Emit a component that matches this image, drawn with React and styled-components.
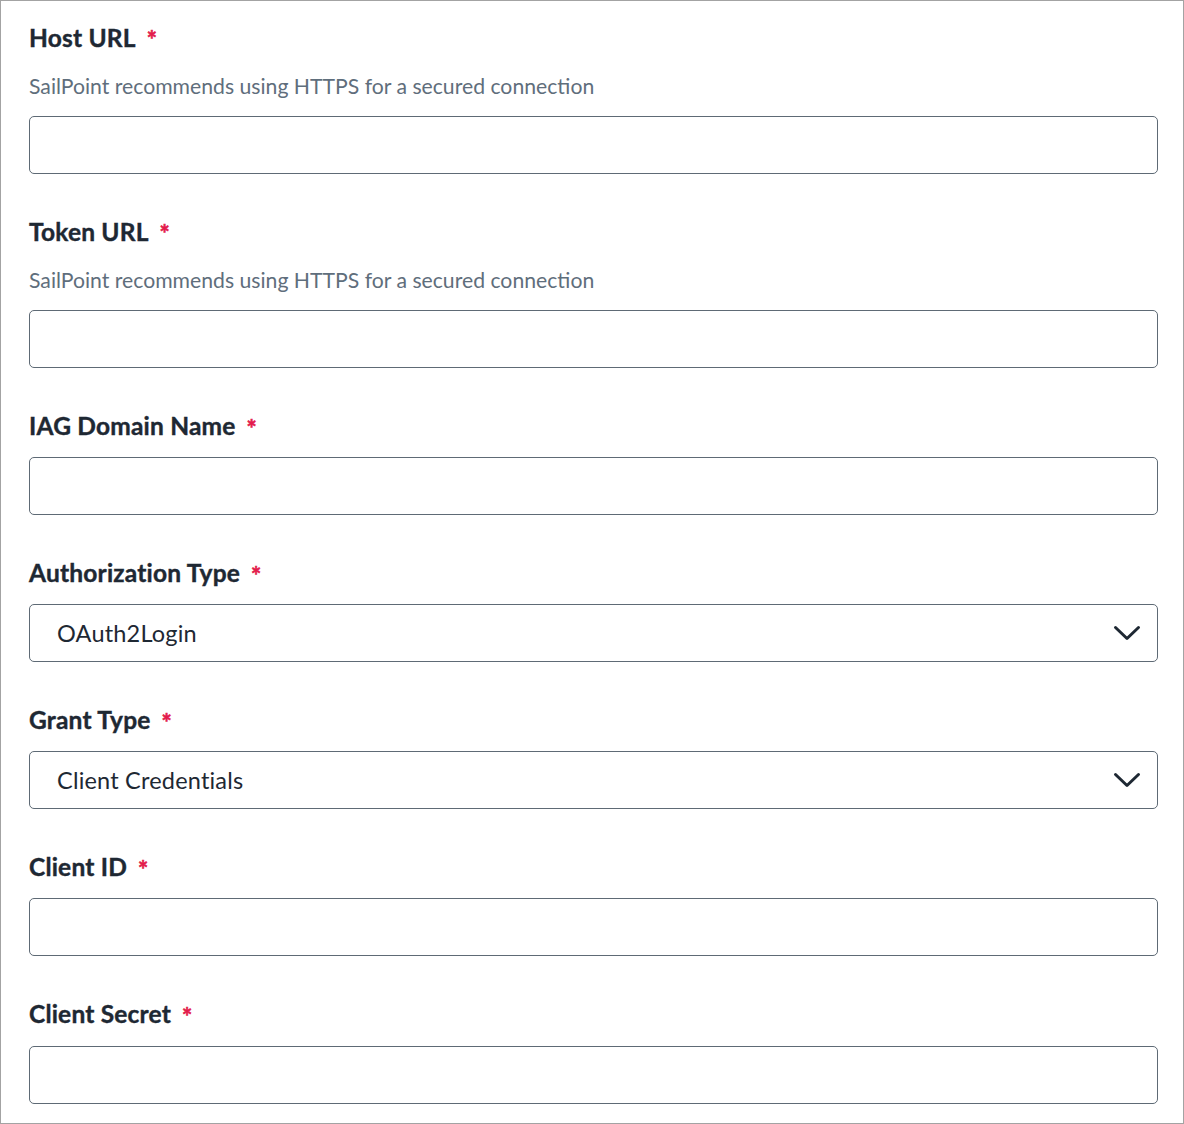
import styled, { createGlobalStyle } from 'styled-components';

const GlobalStyle = createGlobalStyle`
    html, body {
        margin: 0;
        padding: 0;
        background: #ffffff;
    }
    * {
        box-sizing: border-box;
    }
`;

const Panel = styled.form`
    width: 1184px;
    height: 1124px;
    border: 1px solid #a3a3a3;
    padding: 21.2px 25px 0 28px;
    display: flex;
    flex-direction: column;
    gap: 42.5px;
    font-family: Lato, "Liberation Sans", sans-serif;
    overflow: hidden;
`;

const Field = styled.div`
    display: flex;
    flex-direction: column;
`;

const Label = styled.label`
    display: flex;
    align-items: center;
    gap: 11px;
    height: 30px;
    margin-bottom: 16.6px;
    font-size: 24.5px;
    font-weight: 700;
    letter-spacing: 0.2px;
    color: #1e2833;
    -webkit-text-stroke: 0.4px #1e2833;
`;

const Required = styled.span`
    color: #e31b4c;
    -webkit-text-stroke: 0.6px #e31b4c;
    font-size: 24px;
    font-weight: 700;
    line-height: 1;
    margin-top: 6px;
`;

const Helper = styled.p`
    margin: 5.5px 0 17.6px;
    font-size: 21.2px;
    line-height: 24px;
    color: #5f6e7c;
`;

const TextInput = styled.input`
    width: 100%;
    height: 58px;
    border: 1px solid #5e6a75;
    border-radius: 5px;
    padding: 0 26px;
    font-family: inherit;
    font-size: 23px;
    color: #1e2833;
    background: #ffffff;
    outline: none;
`;

const SelectBox = styled.div`
    width: 100%;
    height: 58px;
    border: 1px solid #5e6a75;
    border-radius: 5px;
    padding: 0 16px 0 27px;
    display: flex;
    align-items: center;
    justify-content: space-between;
    font-size: 23.5px;
    letter-spacing: 0.2px;
    color: #1e2833;
    background: #ffffff;
`;

const Chevron = () => (
    <svg width="28" height="16" viewBox="0 0 28 16" fill="none">
        <path d="M2.5 2.5 L14 13.5 L25.5 2.5" stroke="#1e2833" strokeWidth="3" strokeLinecap="round" strokeLinejoin="round" />
    </svg>
);

const fields = [
    { label: 'Host URL', helper: 'SailPoint recommends using HTTPS for a secured connection' },
    { label: 'Token URL', helper: 'SailPoint recommends using HTTPS for a secured connection' },
    { label: 'IAG Domain Name' },
    { label: 'Authorization Type', select: 'OAuth2Login' },
    { label: 'Grant Type', select: 'Client Credentials' },
    { label: 'Client ID' },
    { label: 'Client Secret' },
];

export default function App() {
    return (
        <>
            <GlobalStyle />
            <Panel>
                {fields.map((f) => (
                    <Field key={f.label}>
                        <Label>
                            {f.label}
                            <Required>*</Required>
                        </Label>
                        {f.helper && <Helper>{f.helper}</Helper>}
                        {f.select ? (
                            <SelectBox>
                                <span>{f.select}</span>
                                <Chevron />
                            </SelectBox>
                        ) : (
                            <TextInput type="text" />
                        )}
                    </Field>
                ))}
            </Panel>
        </>
    );
}
